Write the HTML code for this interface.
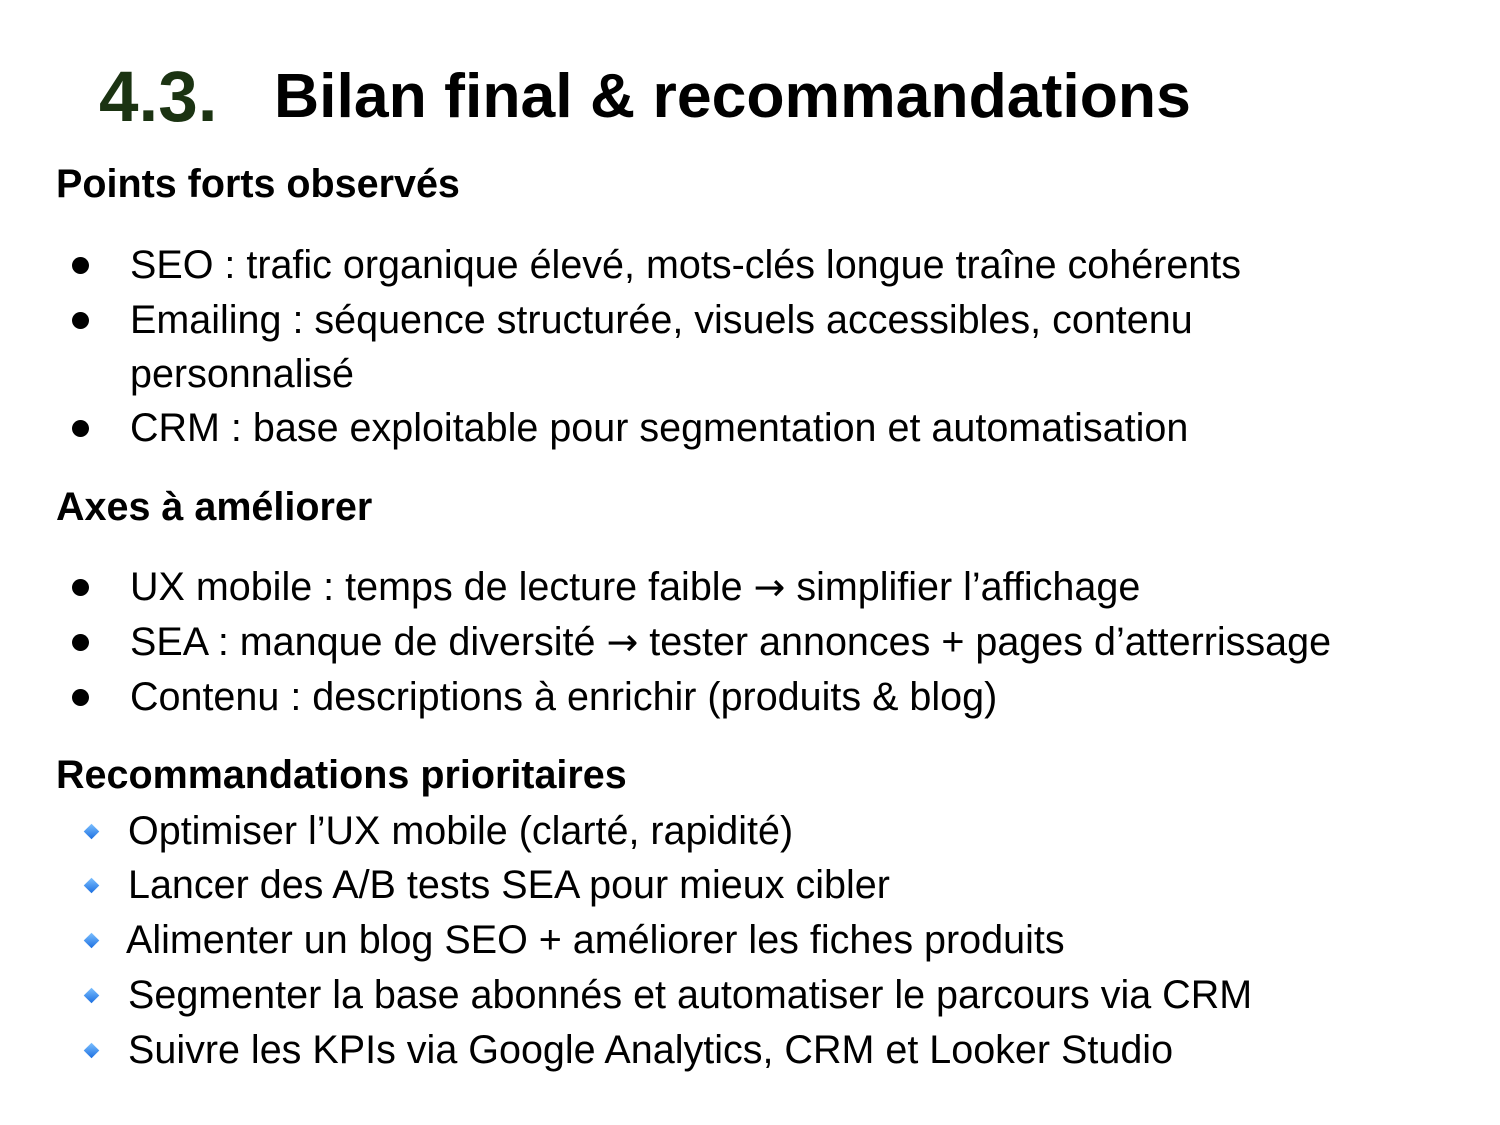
<!DOCTYPE html>
<html><head><meta charset="utf-8"><style>
html,body{margin:0;padding:0;background:#fff;}
body{width:1500px;height:1125px;position:relative;overflow:hidden;font-family:"Liberation Sans",Arial,sans-serif;color:#000;}
.l{position:absolute;white-space:nowrap;line-height:1;}
.t{font-size:39.5px;}
.h{font-size:39.5px;font-weight:bold;}
.b{position:absolute;width:17px;height:17px;border-radius:50%;background:#000;}
.d{position:absolute;width:11px;height:11px;transform:rotate(45deg);background:linear-gradient(135deg,#7cc0ff,#1c6fe0);}
.ar{font-family:"DejaVu Sans",sans-serif;font-size:38px;}
</style></head><body>
<div class="l" style="left:99px;top:62px;font-size:71px;font-weight:bold;color:#1b3312;">4.3.</div>
<div class="l" style="left:274px;top:65px;font-size:62.5px;font-weight:bold;">Bilan final &amp; recommandations</div>

<div class="l h" style="left:56px;top:165px;">Points forts observés</div>
<div class="b" style="left:72px;top:257px;"></div>
<div class="l t" style="left:130px;top:246px;">SEO : trafic organique élevé, mots-clés longue traîne cohérents</div>
<div class="b" style="left:72px;top:312px;"></div>
<div class="l t" style="left:130px;top:301px;">Emailing : séquence structurée, visuels accessibles, contenu</div>
<div class="l t" style="left:130px;top:355px;">personnalisé</div>
<div class="b" style="left:72px;top:420px;"></div>
<div class="l t" style="left:130px;top:409px;">CRM : base exploitable pour segmentation et automatisation</div>

<div class="l h" style="left:56px;top:488px;">Axes à améliorer</div>
<div class="b" style="left:72px;top:579px;"></div>
<div class="l t" style="left:130px;top:568px;">UX mobile : temps de lecture faible <span class="ar">→</span> simplifier l’affichage</div>
<div class="b" style="left:72px;top:634px;"></div>
<div class="l t" style="left:130px;top:623px;">SEA : manque de diversité <span class="ar">→</span> tester annonces + pages d’atterrissage</div>
<div class="b" style="left:72px;top:689px;"></div>
<div class="l t" style="left:130px;top:678px;">Contenu : descriptions à enrichir (produits &amp; blog)</div>

<div class="l h" style="left:56px;top:756px;">Recommandations prioritaires</div>
<div class="d" style="left:86px;top:826px;"></div>
<div class="l t" style="left:128px;top:812px;">Optimiser l’UX mobile (clarté, rapidité)</div>
<div class="d" style="left:86px;top:880px;"></div>
<div class="l t" style="left:128px;top:866px;">Lancer des A/B tests SEA pour mieux cibler</div>
<div class="d" style="left:86px;top:935px;"></div>
<div class="l t" style="left:126px;top:921px;">Alimenter un blog SEO + améliorer les fiches produits</div>
<div class="d" style="left:86px;top:990px;"></div>
<div class="l t" style="left:128px;top:976px;">Segmenter la base abonnés et automatiser le parcours via CRM</div>
<div class="d" style="left:86px;top:1045px;"></div>
<div class="l t" style="left:128px;top:1031px;">Suivre les KPIs via Google Analytics, CRM et Looker Studio</div>
</body></html>
